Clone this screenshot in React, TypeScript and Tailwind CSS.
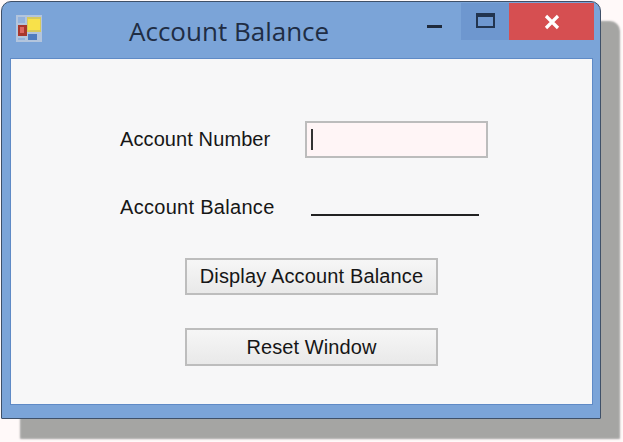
export default function App() {
  return (
    <div className="w-[623px] h-[442px] overflow-hidden bg-[#fff9f9] pt-[1px] pl-[1px] font-['Liberation_Sans',sans-serif]">
      <div className="w-[600px] h-[418px] flex flex-col rounded-t-[10px] rounded-b-[1px] border border-[#3f5068] bg-[#7ba4d8] shadow-[19px_20px_2px_#a5a5a3]">
        <div className="h-[56px] shrink-0 flex items-start pl-[14px] pr-[6px]">
          <svg width="28" height="28" viewBox="0 0 28 28" className="mt-[13px] shrink-0">
            <rect x="0" y="0" width="26" height="27" fill="#b3c5dd" />
            <rect x="2" y="2" width="7" height="6" fill="#93b2dc" />
            <rect x="11" y="2" width="14" height="15" fill="#d6c95e" />
            <rect x="12" y="4" width="12" height="11" fill="#f8e14a" />
            <rect x="2" y="10" width="9" height="11" fill="#a8362c" />
            <rect x="4" y="12" width="4" height="6" fill="#dc6660" />
            <rect x="12" y="19" width="9" height="6" fill="#4f7cc0" />
            <rect x="2" y="23" width="7" height="2" fill="#93b2dc" />
          </svg>
          <span className="ml-[85px] mt-[12px] text-[#1f2d44] text-[26px] leading-[34px] font-['Open_Sans',sans-serif]">
            Account Balance
          </span>
          <div className="ml-auto flex items-start">
            <div className="w-[52px] h-[36px] mt-[1px] flex justify-start pl-[18px]">
              <div className="w-[15px] h-[3px] mt-[22px] bg-[#1f2a3c]" />
            </div>
            <div className="w-[48px] h-[37px] mt-[1px] bg-[#6e97cf] flex justify-center">
              <div className="w-[19px] h-[15px] mt-[10px] border-2 border-t-[4px] border-[#22344f]" />
            </div>
            <div className="w-[85px] h-[37px] mt-[1px] bg-[#d64f51] flex items-center justify-center">
              <svg width="16" height="16" viewBox="0 0 16 16">
                <path d="M2 2 L14 14 M14 2 L2 14" stroke="#fff" strokeWidth="3.2" />
              </svg>
            </div>
          </div>
        </div>
        <div className="ml-[8px] w-[583px] h-[347px] border border-[#5f8ac6] bg-[#f7f7f8] pt-[62px] pl-[109px] text-[#161616] text-[20px]">
          <div className="flex items-center h-[37px]">
            <span className="w-[185px] tracking-[0.1px] pb-[1px]">Account Number</span>
            <div className="w-[183px] h-[37px] border-2 border-[#bcbcbc] bg-[#fff5f6] flex items-center pl-[4px]">
              <div className="w-[2px] h-[21px] bg-[#333]" />
            </div>
          </div>
          <div className="flex items-center h-[38px] mt-[30px]">
            <span className="w-[191px] tracking-[0.3px]">Account Balance</span>
            <div className="w-[168px] h-[2px] mt-[16px] bg-[#222]" />
          </div>
          <div className="ml-[65px] mt-[32px] flex flex-col gap-[33px]">
            <button className="w-[253px] h-[37px] border-2 border-[#bdbdbd] bg-gradient-to-b from-[#f6f6f6] to-[#e9e9e9] text-center tracking-[0.15px] pb-[1px]">
              Display Account Balance
            </button>
            <button className="w-[253px] h-[38px] border-2 border-[#bdbdbd] bg-gradient-to-b from-[#f6f6f6] to-[#e9e9e9] text-center tracking-[0.1px] pb-[1px]">
              Reset Window
            </button>
          </div>
        </div>
      </div>
    </div>
  );
}
